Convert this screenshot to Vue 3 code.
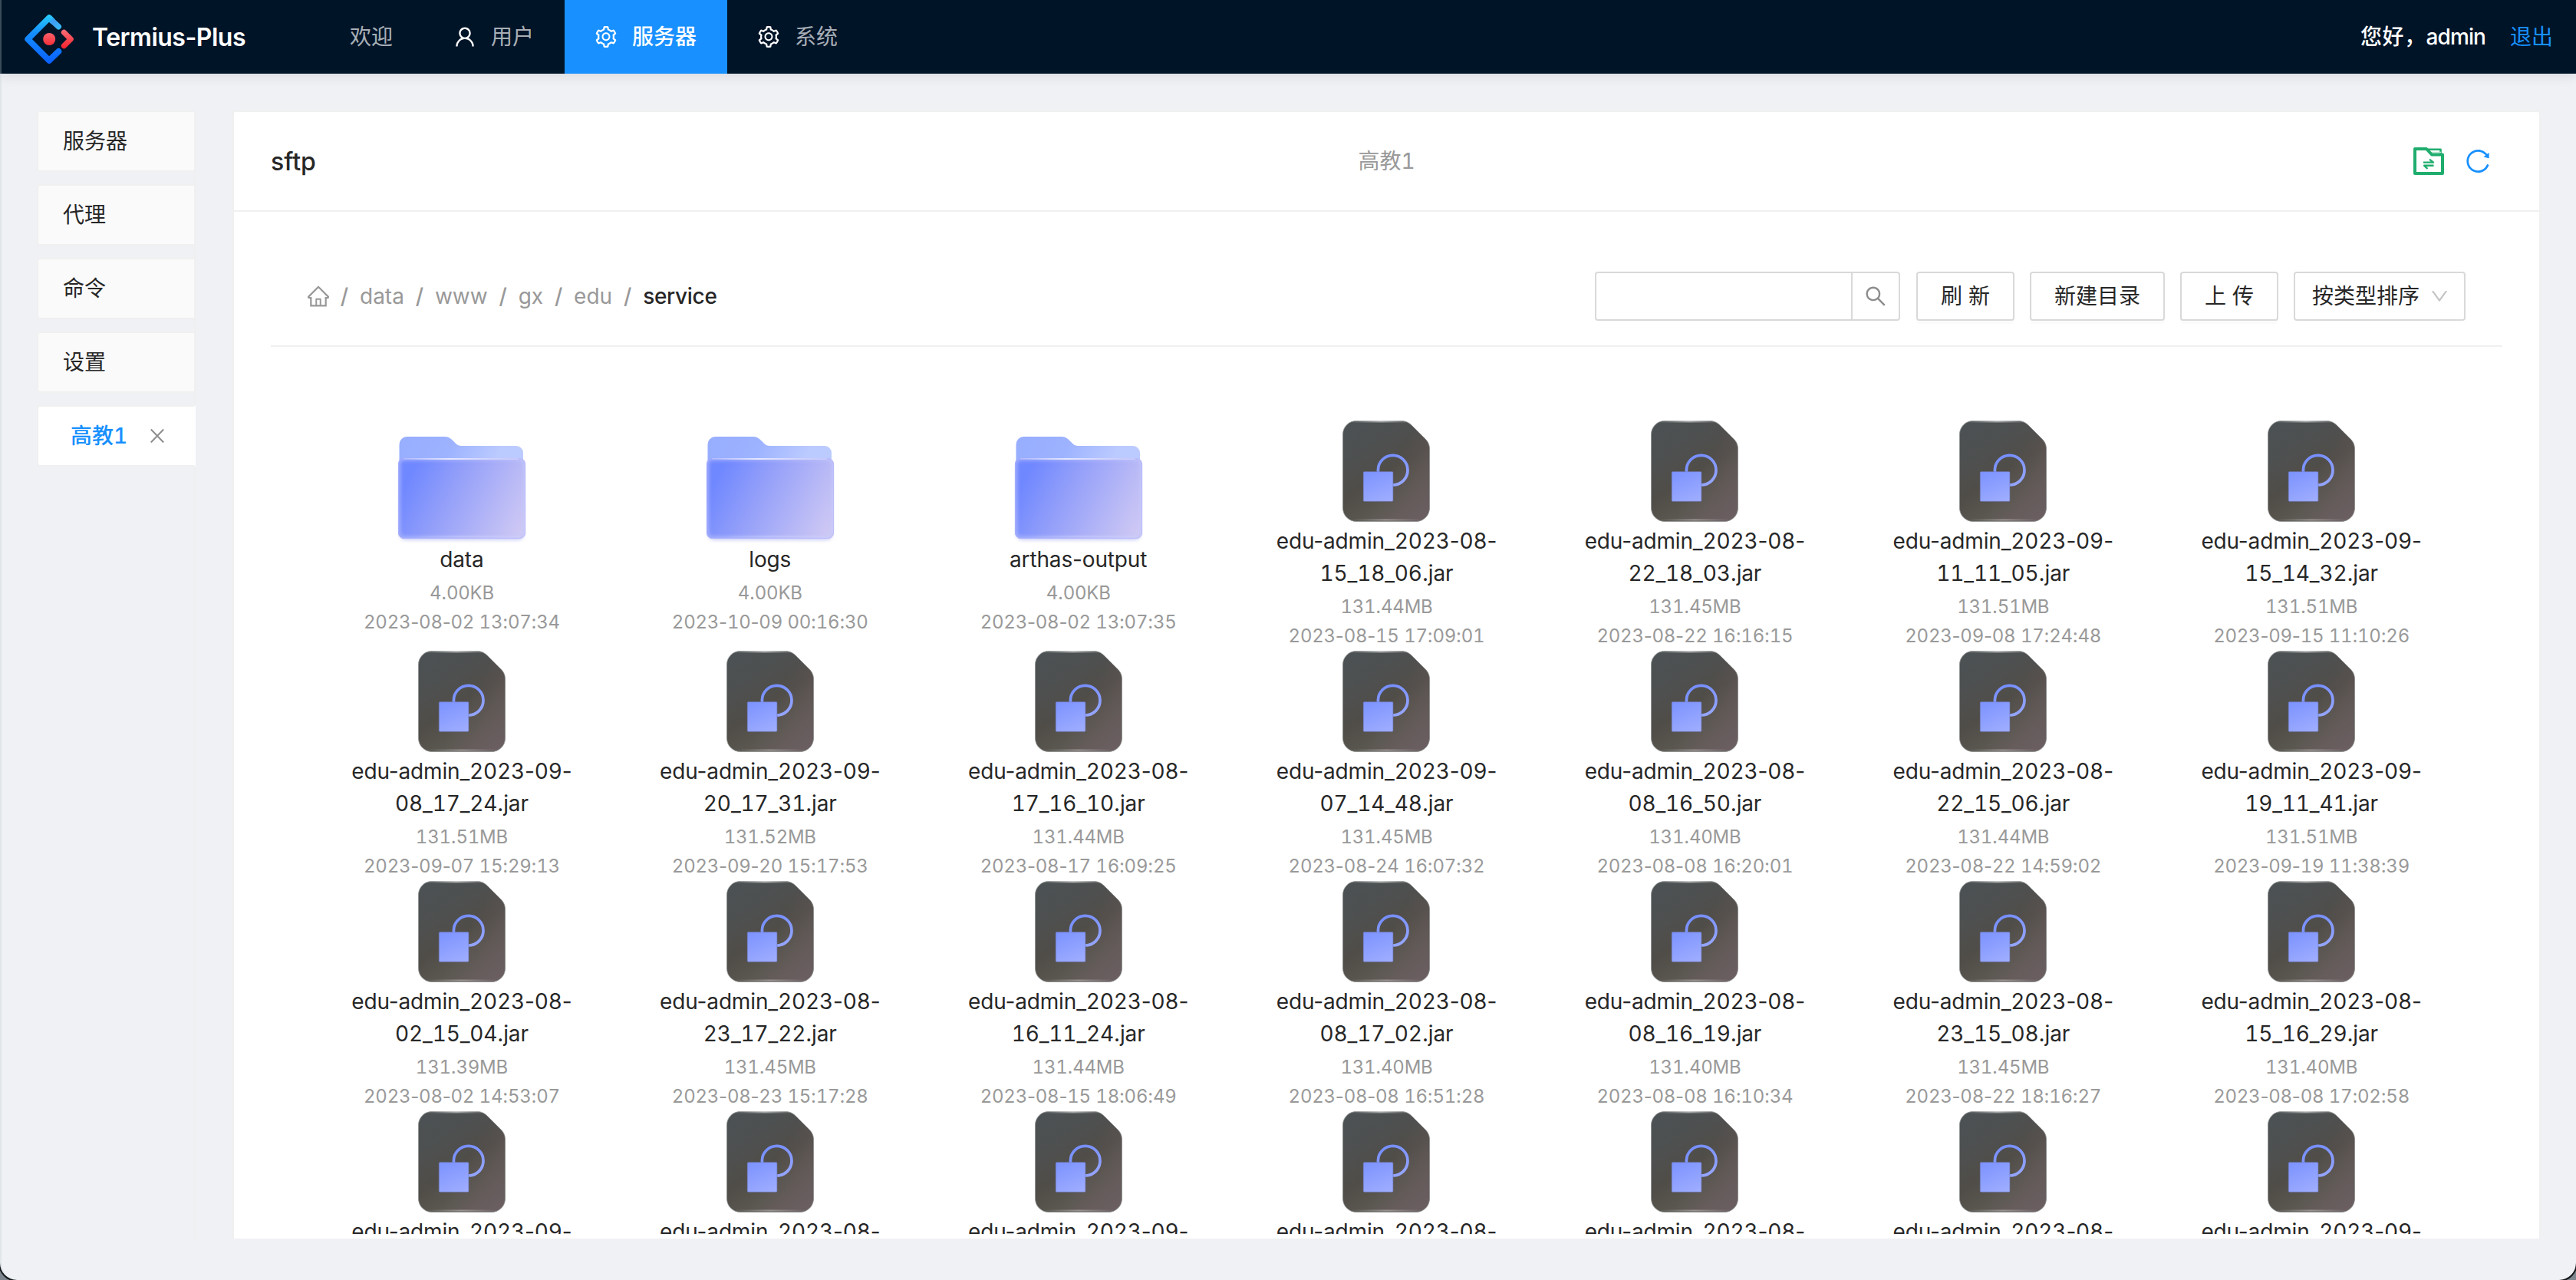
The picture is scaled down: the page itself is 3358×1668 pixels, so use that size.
<script setup>
const icons = {
  user: 'M858.5 763.6a374 374 0 00-80.6-119.5 375.63 375.63 0 00-119.5-80.6c-.4-.2-.8-.3-1.2-.5C719.5 518 760 444.7 760 362c0-137-111-248-248-248S264 225 264 362c0 82.7 40.5 156 102.8 201.1-.4.2-.8.3-1.2.5-44.8 18.9-85 46-119.5 80.6a375.63 375.63 0 00-80.6 119.5A371.7 371.7 0 00136 901.8a8 8 0 008 8.2h60c4.4 0 7.9-3.5 8-7.8 2-77.2 33-149.5 87.8-204.3 56.7-56.7 132-87.9 212.2-87.9s155.5 31.2 212.2 87.9C779 752.7 810 825 812 902.2c.1 4.4 3.6 7.8 8 7.8h60a8 8 0 008-8.2c-1-47.8-10.9-94.3-29.5-138.2zM512 534c-45.9 0-89.1-17.9-121.6-50.4S340 407.9 340 362c0-45.9 17.9-89.1 50.4-121.6S466.1 190 512 190s89.1 17.9 121.6 50.4S684 316.1 684 362c0 45.9-17.9 89.1-50.4 121.6S557.9 534 512 534z',
  setting: 'M924.8 625.7l-65.5-56c3.1-19 4.7-38.4 4.7-57.8s-1.6-38.8-4.7-57.8l65.5-56a32.03 32.03 0 009.3-35.2l-.9-2.6a443.74 443.74 0 00-79.7-137.9l-1.8-2.1a32.12 32.12 0 00-35.1-9.5l-81.3 28.9c-30-24.6-63.5-44-99.7-57.6l-15.7-85a32.05 32.05 0 00-25.8-25.7l-2.7-.5c-52.1-9.4-106.9-9.4-159 0l-2.7.5a32.05 32.05 0 00-25.8 25.7l-15.8 85.4a351.86 351.86 0 00-99 57.4l-81.9-29.1a32 32 0 00-35.1 9.5l-1.8 2.1a446.02 446.02 0 00-79.7 137.9l-.9 2.6c-4.5 12.5-.8 26.5 9.3 35.2l66.3 56.6c-3.1 18.8-4.6 38-4.6 57.1 0 19.2 1.5 38.4 4.6 57.1L99 625.5a32.03 32.03 0 00-9.3 35.2l.9 2.6c18.1 50.4 44.9 96.9 79.7 137.9l1.8 2.1a32.12 32.12 0 0035.1 9.5l81.9-29.1c29.8 24.5 63.1 43.9 99 57.4l15.8 85.4a32.05 32.05 0 0025.8 25.7l2.7.5a449.4 449.4 0 00159 0l2.7-.5a32.05 32.05 0 0025.8-25.7l15.7-85a350 350 0 0099.7-57.6l81.3 28.9a32 32 0 0035.1-9.5l1.8-2.1c34.8-41.1 61.6-87.5 79.7-137.9l.9-2.6c4.5-12.3.8-26.3-9.3-35zM788.3 465.9c2.5 15.1 3.8 30.6 3.8 46.1s-1.3 31-3.8 46.1l-6.6 40.1 74.7 63.9a370.03 370.03 0 01-42.6 73.6L721 702.8l-31.4 25.8c-23.9 19.6-50.5 35-79.3 45.8l-38.1 14.3-17.9 97a377.5 377.5 0 01-85 0l-17.9-97.2-37.8-14.5c-28.5-10.8-55-26.2-78.7-45.7l-31.4-25.9-93.4 33.2c-17-22.9-31.2-47.6-42.6-73.6l75.5-64.5-6.5-40c-2.4-14.9-3.7-30.3-3.7-45.5 0-15.3 1.2-30.6 3.7-45.5l6.5-40-75.5-64.5c11.3-26.1 25.6-50.7 42.6-73.6l93.4 33.2 31.4-25.9c23.7-19.5 50.2-34.9 78.7-45.7l37.9-14.3 17.9-97.2c28.1-3.2 56.8-3.2 85 0l17.9 97 38.1 14.3c28.7 10.8 55.4 26.2 79.3 45.8l31.4 25.8 92.8-32.9c17 22.9 31.2 47.6 42.6 73.6L781.8 426l6.5 39.9zM512 326c-97.2 0-176 78.8-176 176s78.8 176 176 176 176-78.8 176-176-78.8-176-176-176zm79.2 255.2A111.6 111.6 0 01512 614c-29.9 0-58-11.7-79.2-32.8A111.6 111.6 0 01400 502c0-29.9 11.7-58 32.8-79.2C454 401.6 482.1 390 512 390c29.9 0 58 11.6 79.2 32.8A111.6 111.6 0 01624 502c0 29.9-11.7 58-32.8 79.2z',
  home: 'M946.5 505L560.1 118.8l-25.9-25.9a31.5 31.5 0 00-44.4 0L77.5 505a63.9 63.9 0 00-18.8 46c.4 35.2 29.7 63.3 64.9 63.3h42.5V940h691.8V614.3h43.4c17.1 0 33.2-6.7 45.3-18.8a63.6 63.6 0 0018.7-45.3c0-17-6.7-33.1-18.8-45.2zM568 868H456V664h112v204zm217.9-325.7V868H632V640c0-22.1-17.9-40-40-40H432c-22.1 0-40 17.9-40 40v228H238.1V542.3h-96l370-369.7 23.1 23.1L882 542.3h-96.1z',
  search: 'M909.6 854.5L649.9 594.8C690.2 542.7 712 479 712 412c0-80.2-31.3-155.4-87.9-212.1-56.6-56.7-132-87.9-212.1-87.9s-155.5 31.3-212.1 87.9C143.2 256.5 112 331.8 112 412c0 80.1 31.3 155.5 87.9 212.1C256.5 680.8 331.8 712 412 712c67 0 130.6-21.8 182.7-62l259.7 259.6a8.2 8.2 0 0011.6 0l43.6-43.5a8.2 8.2 0 000-11.6zM570.4 570.4C528 612.7 471.8 636 412 636s-116-23.3-158.4-65.6C211.3 528 188 471.8 188 412s23.3-116.1 65.6-158.4C296 211.3 352.2 188 412 188s116.1 23.2 158.4 65.6S636 352.2 636 412s-23.3 116.1-65.6 158.4z',
  down: 'M884 256h-75c-5.1 0-9.9 2.5-12.9 6.6L512 654.2 227.9 262.6c-3-4.1-7.8-6.6-12.9-6.6h-75c-6.5 0-10.3 7.4-6.5 12.7l352.6 486.1c12.8 17.6 39 17.6 51.7 0l352.6-486.1c3.9-5.3.1-12.7-6.4-12.7z',
  reload: 'M909.1 209.3l-56.4 44.1C775.8 155.1 656.2 92 521.9 92 290 92 102.3 279.5 102 511.5 101.7 743.7 289.8 932 521.9 932c181.3 0 335.8-115 394.6-276.1 1.5-4.2-.7-8.9-4.9-10.3l-56.7-19.5a8 8 0 00-10.1 4.8c-1.8 5-3.8 10-5.9 14.9-17.3 41-42.1 77.8-73.7 109.4A344.77 344.77 0 01655.9 829c-42.3 17.9-87.4 27-133.8 27-46.5 0-91.5-9.1-133.8-27A341.5 341.5 0 01279 755.2a342.16 342.16 0 01-73.7-109.4c-17.9-42.4-27-87.4-27-133.9s9.1-91.5 27-133.9c17.3-41 42.1-77.8 73.7-109.4 31.6-31.6 68.4-56.4 109.3-73.8 42.3-17.9 87.4-27 133.8-27 46.5 0 91.5 9.1 133.8 27a341.5 341.5 0 01109.3 73.8c9.9 9.9 19.2 20.4 27.8 31.4l-60.2 47a8 8 0 003 14.1l175.6 43c5 1.2 9.9-2.6 9.9-7.7l.8-180.9c-.1-6.6-7.8-10.3-13-6.2z',
}

const nav = [
  { label: '欢迎' },
  { label: '用户', icon: icons.user },
  { label: '服务器', icon: icons.setting, active: true },
  { label: '系统', icon: icons.setting },
]

const tabs = ['服务器', '代理', '命令', '设置']
const crumbs = ['data', 'www', 'gx', 'edu']

const dir = (name, date) => ({ dir: true, lines: [name], size: '4.00KB', date })
const jar = (month, rest, size, date) => ({
  lines: [`edu-admin_2023-${month}-`, `${rest}.jar`],
  size: `${size}MB`,
  date,
})

const files = [
  dir('data', '2023-08-02 13:07:34'),
  dir('logs', '2023-10-09 00:16:30'),
  dir('arthas-output', '2023-08-02 13:07:35'),
  jar('08', '15_18_06', '131.44', '2023-08-15 17:09:01'),
  jar('08', '22_18_03', '131.45', '2023-08-22 16:16:15'),
  jar('09', '11_11_05', '131.51', '2023-09-08 17:24:48'),
  jar('09', '15_14_32', '131.51', '2023-09-15 11:10:26'),
  jar('09', '08_17_24', '131.51', '2023-09-07 15:29:13'),
  jar('09', '20_17_31', '131.52', '2023-09-20 15:17:53'),
  jar('08', '17_16_10', '131.44', '2023-08-17 16:09:25'),
  jar('09', '07_14_48', '131.45', '2023-08-24 16:07:32'),
  jar('08', '08_16_50', '131.40', '2023-08-08 16:20:01'),
  jar('08', '22_15_06', '131.44', '2023-08-22 14:59:02'),
  jar('09', '19_11_41', '131.51', '2023-09-19 11:38:39'),
  jar('08', '02_15_04', '131.39', '2023-08-02 14:53:07'),
  jar('08', '23_17_22', '131.45', '2023-08-23 15:17:28'),
  jar('08', '16_11_24', '131.44', '2023-08-15 18:06:49'),
  jar('08', '08_17_02', '131.40', '2023-08-08 16:51:28'),
  jar('08', '08_16_19', '131.40', '2023-08-08 16:10:34'),
  jar('08', '23_15_08', '131.45', '2023-08-22 18:16:27'),
  jar('08', '15_16_29', '131.40', '2023-08-08 17:02:58'),
  ...['09', '08', '09', '08', '08', '08', '09'].map((m) => ({ lines: [`edu-admin_2023-${m}-`] })),
]

// Digits are set in tabular figures, punctuation keeps its natural width.
const parts = (text = '') =>
  text.split(/(\d+)/).filter(Boolean).map((t) => ({ t, num: /\d/.test(t) }))
</script>

<template>
  <div class="page">
    <svg class="sprite" aria-hidden="true">
      <defs>
        <linearGradient id="dirBack" gradientUnits="userSpaceOnUse" x1="20" y1="0" x2="120" y2="50">
          <stop offset="0" stop-color="#98aeff" /><stop offset="0.45" stop-color="#9db3ff" /><stop offset="1" stop-color="#bccbff" />
        </linearGradient>
        <linearGradient id="dirFront" gradientUnits="userSpaceOnUse" x1="16" y1="52" x2="160" y2="125">
          <stop offset="0" stop-color="#7088ff" /><stop offset="0.35" stop-color="#939ff9" /><stop offset="1" stop-color="#cec8f4" />
        </linearGradient>
        <linearGradient id="dirShine" x1="0" x2="1" y1="0" y2="0">
          <stop offset="0" stop-color="#fff" stop-opacity="0.15" /><stop offset="0.4" stop-color="#fff" stop-opacity="0.7" /><stop offset="1" stop-color="#fff" stop-opacity="0.2" />
        </linearGradient>
        <linearGradient id="fileBody" gradientUnits="userSpaceOnUse" x1="20" y1="5" x2="100" y2="128">
          <stop offset="0" stop-color="#4c5153" /><stop offset="0.25" stop-color="#4e5050" /><stop offset="0.5" stop-color="#504d48" /><stop offset="0.75" stop-color="#5b5851" /><stop offset="1" stop-color="#6a6160" />
        </linearGradient>
        <linearGradient id="fileWarm" gradientUnits="userSpaceOnUse" x1="66" y1="60" x2="116" y2="86">
          <stop offset="0" stop-color="#6a5c60" stop-opacity="0" /><stop offset="1" stop-color="#6a5c60" stop-opacity="0.6" />
        </linearGradient>
        <linearGradient id="fileRim" x1="0" x2="1" y1="0" y2="0">
          <stop offset="0" stop-color="#fff" stop-opacity="0" /><stop offset="0.5" stop-color="#fff" stop-opacity="0.5" /><stop offset="1" stop-color="#fff" stop-opacity="0" />
        </linearGradient>
        <linearGradient id="fileMark" gradientUnits="userSpaceOnUse" x1="40" y1="55" x2="62" y2="106">
          <stop offset="0" stop-color="#778fff" /><stop offset="1" stop-color="#a0aeff" />
        </linearGradient>
        <filter id="soft" x="-10%" y="-10%" width="120%" height="120%"><feGaussianBlur stdDeviation="2.2" /></filter>
        <clipPath id="dirClip"><rect x="1" y="28" width="166" height="105" rx="8" /></clipPath>
      </defs>
      <symbol id="folder" viewBox="0 0 168 140">
        <rect x="2" y="31" width="164" height="104" rx="9" fill="#8f97ee" opacity="0.45" filter="url(#soft)" />
        <path d="M2.5 10a10 10 0 0 1 10-10H62c10 0 13 12 21 12h72a9 9 0 0 1 9 9v30H2.5z" fill="url(#dirBack)" />
        <rect x="1" y="28" width="166" height="105" rx="8" fill="url(#dirFront)" />
        <g clip-path="url(#dirClip)">
          <rect x="1" y="28" width="166" height="105" rx="8" fill="none" stroke="#c3caff" stroke-width="7" opacity="0.5" filter="url(#soft)" />
        </g>
        <rect x="1.5" y="28.5" width="165" height="104" rx="7.5" fill="none" stroke="#b4b4fa" stroke-opacity="0.6" />
        <rect x="8" y="28" width="150" height="2" fill="url(#dirShine)" />
        <rect x="30" y="129" width="130" height="1.5" fill="url(#dirShine)" opacity="0.3" />
      </symbol>
      <symbol id="file" viewBox="0 0 114 132">
        <path d="M18 .5H77c6 0 10 2.500 14 6.500L107.500 23.500c4 4 6 8 6 14V114a17.500 17.500 0 0 1-17.500 17.500H18A17.500 17.500 0 0 1 .5 114V18A17.500 17.500 0 0 1 18 .5z" fill="url(#fileBody)" />
        <path d="M18 .5H77c6 0 10 2.500 14 6.500L107.500 23.500c4 4 6 8 6 14V114a17.500 17.500 0 0 1-17.500 17.500H18A17.500 17.500 0 0 1 .5 114V18A17.500 17.500 0 0 1 18 .5z" fill="url(#fileWarm)" stroke="#8d9190" stroke-opacity="0.8" />
        <rect x="8" y="0" width="84" height="2.500" fill="url(#fileRim)" />
        <rect x="10" y="128.500" width="94" height="2" fill="url(#fileRim)" opacity="0.7" />
        <circle cx="65.700" cy="64.700" r="19.300" fill="none" stroke="url(#fileMark)" stroke-width="3.700" />
        <rect x="27.300" y="66.700" width="38.600" height="38.600" rx="1" fill="url(#fileMark)" stroke="#727cc0" stroke-width="0.600" />
      </symbol>
    </svg>

    <header class="topbar">
      <svg class="logo" viewBox="0 0 64 64" fill="none" stroke-linecap="round" stroke-linejoin="round">
        <defs>
          <linearGradient id="lgBlue" gradientUnits="userSpaceOnUse" x1="32" y1="0" x2="32" y2="64">
            <stop offset="0" stop-color="#29cdff" /><stop offset="0.38" stop-color="#148eff" /><stop offset="1" stop-color="#0a60ff" />
          </linearGradient>
          <linearGradient id="lgTip" gradientUnits="userSpaceOnUse" x1="34" y1="6" x2="46" y2="18">
            <stop offset="0" stop-color="#4294f0" stop-opacity="0.2" /><stop offset="0.3" stop-color="#429cf2" /><stop offset="1" stop-color="#37b8f8" />
          </linearGradient>
          <linearGradient id="lgRed" gradientUnits="userSpaceOnUse" x1="50" y1="20" x2="50" y2="44">
            <stop offset="0" stop-color="#fa6e77" /><stop offset="1" stop-color="#f5222d" />
          </linearGradient>
        </defs>
        <path d="M44.300 48.100L32 59.800 4.300 32 32 4.200l4 4" stroke="url(#lgBlue)" stroke-width="8" />
        <path d="M36.500 8.500l7.800 7.300" stroke="url(#lgTip)" stroke-width="7.400" />
        <path d="M51.400 23.200L60.200 32l-8.800 8.800" stroke="url(#lgRed)" stroke-width="7.200" />
        <circle cx="32.200" cy="32" r="8" fill="url(#lgRed)" />
      </svg>
      <h1 class="brand">Termius-Plus</h1>
      <nav class="nav">
        <a v-for="item in nav" :key="item.label" class="nav-item" :class="{ active: item.active }">
          <svg v-if="item.icon" class="icon" viewBox="64 64 896 896"><path :d="item.icon" /></svg>
          <span>{{ item.label }}</span>
        </a>
      </nav>
      <div class="account"><span class="hello">您好，<b>admin</b></span><a class="logout">退出</a></div>
    </header>

    <div class="body">
      <aside class="side">
        <div v-for="tab in tabs" :key="tab" class="tab">{{ tab }}</div>
        <div class="tab current">
          <span class="num">高教1</span>
          <svg class="close" viewBox="0 0 18 18"><path d="M.8.5L17.200 17.500M17.200.5L.8 17.500" /></svg>
        </div>
      </aside>

      <main class="card">
        <div class="card-head">
          <h2>sftp</h2>
          <span class="subtitle num">高教1</span>
          <div class="tools">
            <svg class="transfer" viewBox="0 0 40 36" fill="none" stroke="#1fad6d">
              <path d="M18 2.800H35.500V9" stroke-width="2.600" stroke-linejoin="round" />
              <path d="M22 6.500H36" stroke="#b9e6d0" stroke-width="1.500" />
              <path d="M2 2H17l7 7.500H38V34H2z" stroke-width="4" stroke-linejoin="round" />
              <path d="M13 19.600H26L21 15.600M26.500 23.800H14.200L18.500 28" stroke-width="2.400" stroke-linejoin="round" />
            </svg>
            <svg class="reload" viewBox="64 64 896 896"><path :d="icons.reload" /></svg>
          </div>
        </div>

        <div class="card-body">
          <div class="bar">
            <div class="crumbs">
              <svg class="icon" viewBox="64 64 896 896"><path :d="icons.home" /></svg>
              <template v-for="c in crumbs" :key="c"><i>/</i><span>{{ c }}</span></template>
              <i>/</i><span class="here">service</span>
            </div>
            <div class="actions">
              <div class="search">
                <div class="field"></div>
                <div class="go"><svg class="icon" viewBox="64 64 896 896"><path :d="icons.search" /></svg></div>
              </div>
              <button class="btn two"><span>刷</span><span>新</span></button>
              <button class="btn">新建目录</button>
              <button class="btn two"><span>上</span><span>传</span></button>
              <div class="select">
                按类型排序
                <svg viewBox="64 64 896 896"><path :d="icons.down" /></svg>
              </div>
            </div>
          </div>

          <div class="grid">
            <div v-for="(f, n) in files" :key="n" class="tile">
              <svg v-if="f.dir" class="pic-dir"><use href="#folder" /></svg>
              <svg v-else class="pic-file"><use href="#file" /></svg>
              <div v-for="line in f.lines" :key="line" class="name"><span v-for="(p, k) in parts(line)" :key="k" :class="{ num: p.num }">{{ p.t }}</span></div>
              <div class="meta size"><span v-for="(p, k) in parts(f.size)" :key="k" :class="{ num: p.num }">{{ p.t }}</span></div>
              <div class="meta date"><span v-for="(p, k) in parts(f.date)" :key="k" :class="{ num: p.num }">{{ p.t }}</span></div>
            </div>
          </div>
        </div>
      </main>
    </div>
    <div class="frame"></div>
  </div>
</template>

<style>
body {
  background: #7d858e;
}
</style>

<style scoped>
* {
  box-sizing: border-box;
}
.page {
  position: relative;
  width: 3358px;
  height: 1668px;
  overflow: hidden;
  display: flex;
  flex-direction: column;
  background: #f0f1f5;
  color: #272727;
  font-family: Inter, 'Noto Sans CJK SC', sans-serif;
  font-size: 28px;
  line-height: 44px;
}
.num {
  font-variant-numeric: tabular-nums;
}
.sprite {
  position: absolute;
  width: 0;
  height: 0;
}
.icon {
  width: 28px;
  height: 28px;
  fill: currentColor;
  flex: none;
}

.topbar {
  flex: none;
  height: 96px;
  padding: 0 30px 0 32px;
  display: flex;
  align-items: center;
  background: #001428;
  box-shadow: 0 2px 16px rgba(0, 21, 41, 0.12);
  color: #fff;
}
.logo {
  width: 64px;
  height: 64px;
  margin-top: 6px;
}
.brand {
  width: 320px;
  margin: 2px 0 0;
  padding-left: 24px;
  font-size: 32px;
  font-weight: 600;
  letter-spacing: -0.5px;
  white-space: nowrap;
}
.nav {
  display: flex;
  height: 96px;
}
.nav-item {
  display: flex;
  align-items: center;
  gap: 20px;
  padding: 0 40px;
}
.nav-item span {
  color: rgba(255, 255, 255, 0.68);
}
.nav-item.active {
  background: #1890ff;
}
.nav-item.active span {
  color: #fff;
  font-weight: 500;
}
.account {
  margin-left: auto;
  display: flex;
  gap: 32px;
}
.hello {
  font-weight: 500;
  letter-spacing: 0.5px;
}
.hello b {
  font-weight: 500;
  letter-spacing: -0.9px;
}
.logout {
  color: #1890ff;
}

.body {
  flex: none;
  height: 1518px;
  padding: 48px 46px 0 48px;
  display: flex;
}
.side {
  width: 207px;
  flex: none;
  display: flex;
  flex-direction: column;
  gap: 16px;
  border-right: 2px solid #eeefee;
}
.tab {
  height: 80px;
  margin-right: -2px;
  padding: 0 32px;
  border: 2px solid #f0f0f0;
  border-radius: 4px 0 0 4px;
  background: #fafafa;
  display: flex;
  align-items: center;
}
.tab.current {
  padding: 0 39px 0 42px;
  justify-content: space-between;
  border-right-color: #fff;
  background: #fff;
  color: #1890ff;
  font-weight: 500;
}
.close {
  width: 18px;
  height: 18px;
  fill: none;
  stroke: #8c8c8c;
  stroke-width: 2;
}

.card {
  width: 3009px;
  flex: none;
  margin-left: 48px;
  border: 2px solid #f0f0f0;
  border-bottom: 0;
  border-radius: 4px 4px 0 0;
  background: #fff;
  display: flex;
  flex-direction: column;
}
.card-head {
  flex: none;
  height: 130px;
  padding: 0 64px 0 48px;
  border-bottom: 2px solid #f0f0f0;
  display: grid;
  grid-template-columns: 1fr auto 1fr;
  align-items: center;
}
.card-head h2 {
  margin: 2px 0 0;
  font-size: 32px;
  font-weight: 500;
}
.subtitle {
  color: #999;
  padding-left: 16px;
}
.tools {
  display: flex;
  align-items: center;
  justify-content: flex-end;
  gap: 28px;
}
.transfer {
  width: 40px;
  height: 36px;
}
.reload {
  width: 32px;
  height: 32px;
  fill: #1890ff;
}
.card-body {
  flex: 1;
  min-height: 0;
  padding: 48px 48px 6px;
  display: flex;
  flex-direction: column;
}
.bar {
  flex: none;
  height: 128px;
  padding: 0 48px 2px;
  border-bottom: 2px solid #f0f0f0;
  display: flex;
  align-items: center;
  justify-content: space-between;
}
.crumbs {
  display: flex;
  align-items: center;
  color: #999;
}
.crumbs i {
  width: 8px;
  margin: 0 16px;
  display: flex;
  justify-content: center;
  font-style: normal;
  font-weight: 500;
}
.here {
  color: #262626;
  font-weight: 500;
  letter-spacing: -0.3px;
}
.actions {
  display: flex;
  gap: 20px;
}
.search {
  width: 398px;
  height: 64px;
  margin-right: 1px;
  border: 2px solid #d9d9d9;
  border-radius: 4px;
  display: flex;
}
.field {
  flex: 1;
}
.go {
  width: 62px;
  border-left: 2px solid #d9d9d9;
  display: flex;
  align-items: center;
  justify-content: center;
  color: #8c8c8c;
}
.btn {
  height: 64px;
  padding: 0 30px;
  border: 2px solid #d9d9d9;
  border-radius: 4px;
  background: #fff;
  box-shadow: 0 4px 0 rgba(0, 0, 0, 0.015);
  color: inherit;
  font: inherit;
}
.btn.two {
  width: 128px;
  display: flex;
  align-items: center;
  justify-content: center;
  gap: 8px;
}
.select {
  width: 224px;
  height: 64px;
  padding: 0 22px;
  border: 2px solid #d9d9d9;
  border-radius: 4px;
  display: flex;
  align-items: center;
  justify-content: space-between;
}
.select svg {
  width: 24px;
  height: 24px;
  margin-right: -2px;
  fill: #c4c4c4;
}

.grid {
  flex: 1;
  min-height: 0;
  overflow: hidden;
  padding: 96px 48px 0;
  display: grid;
  grid-template-columns: repeat(7, 1fr);
  grid-auto-rows: 300px;
}
.tile {
  display: flex;
  flex-direction: column;
  align-items: center;
  white-space: pre;
}
.pic-file {
  width: 114px;
  height: 132px;
  margin-bottom: 4px;
  flex: none;
}
.pic-dir {
  width: 168px;
  height: 140px;
  margin: 21px 0 -1px;
  flex: none;
}
.name {
  height: 42px;
  line-height: 42px;
  letter-spacing: -0.15px;
}
.meta {
  height: 37px;
  line-height: 38px;
  font-size: 24px;
  letter-spacing: -0.25px;
  color: #999;
}
.size {
  height: 38px;
  margin-top: 4px;
}

.frame {
  position: absolute;
  inset: -40px 0 0;
  border-left: 2px solid rgba(190, 205, 205, 0.3);
  border-radius: 0 0 22px 22px;
  box-shadow: 0 0 0 2px #15181b, 0 0 0 24px #7d858e;
  pointer-events: none;
}
</style>
